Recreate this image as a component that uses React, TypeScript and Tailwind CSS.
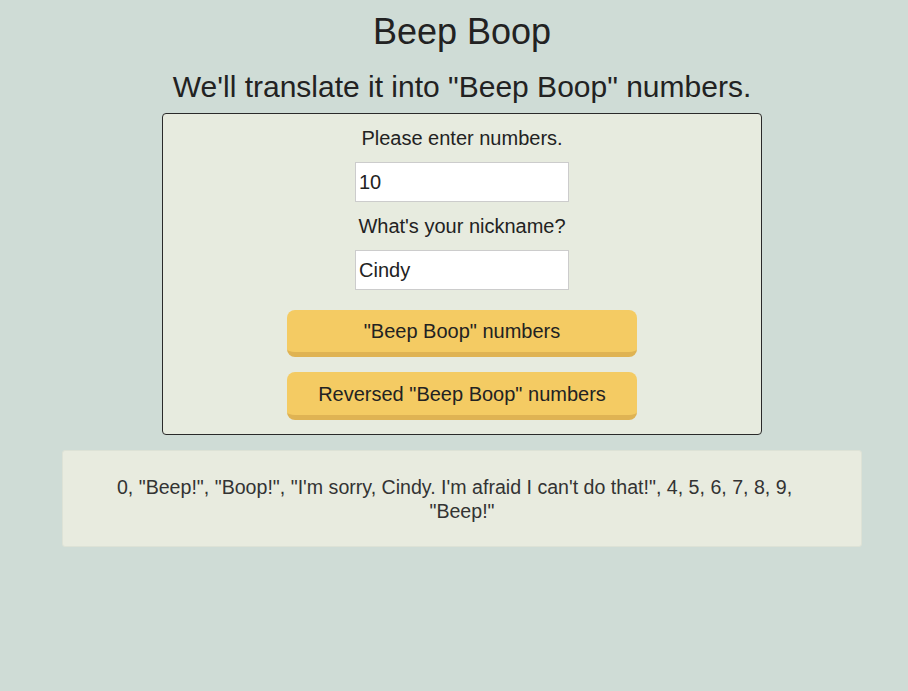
import React from "react";

const font = { fontFamily: '"Liberation Sans", Arial, sans-serif' };

export default function App() {
    return (
        <div
            className="min-h-[691px] bg-[#cfdcd6] text-[#222] flex flex-col items-center pt-[10px] pl-[16px] font-['Liberation_Sans',Arial,sans-serif]"
            style={font}
        >
            <h1 className="text-[36px] leading-[44px]">Beep Boop</h1>
            <h2 className="text-[30px] leading-[34px] mt-[16px]">
                We'll translate it into "Beep Boop" numbers.
            </h2>

            <form
                className="mt-[9px] w-[600px] border border-[#2a2a2a] rounded-[4px] bg-[#e7ebdf] flex flex-col items-center pt-[13px] pb-[14px]"
                onSubmit={(e) => e.preventDefault()}
            >
                <label className="text-[20px] leading-[23px]">Please enter numbers.</label>
                <input
                    defaultValue="10"
                    className="mt-[12px] w-[214px] h-[40px] bg-white border border-[#cccccc] px-[3px] text-[20px] outline-none"
                />
                <label className="mt-[13px] text-[20px] leading-[23px]">What's your nickname?</label>
                <input
                    defaultValue="Cindy"
                    className="mt-[12px] w-[214px] h-[40px] bg-white border border-[#cccccc] px-[3px] text-[20px] outline-none"
                />
                <button
                    type="button"
                    className="mt-[20px] w-[350px] h-[47px] rounded-[8px] bg-[#f4cb63] border-b-[5px] border-[#dfb353] text-[20px] text-[#222]"
                >
                    "Beep Boop" numbers
                </button>
                <button
                    type="button"
                    className="mt-[15px] w-[350px] h-[48px] rounded-[8px] bg-[#f4cb63] border-b-[5px] border-[#dfb353] text-[20px] text-[#222]"
                >
                    Reversed "Beep Boop" numbers
                </button>
            </form>

            <div className="mt-[15px] w-[800px] min-h-[96px] bg-[#e8ebdf] border border-[#dde2d6] rounded-[3px] px-[40px] pt-[24px] pb-[23px] text-center text-[19.6px] leading-[24px] text-[#333]">
                0, "Beep!", "Boop!", "I'm sorry, Cindy. I'm afraid I can't do that!", 4, 5, 6, 7, 8, 9,
                <span className="inline-block w-[15px]" />
                <br />
                "Beep!"
            </div>
        </div>
    );
}
